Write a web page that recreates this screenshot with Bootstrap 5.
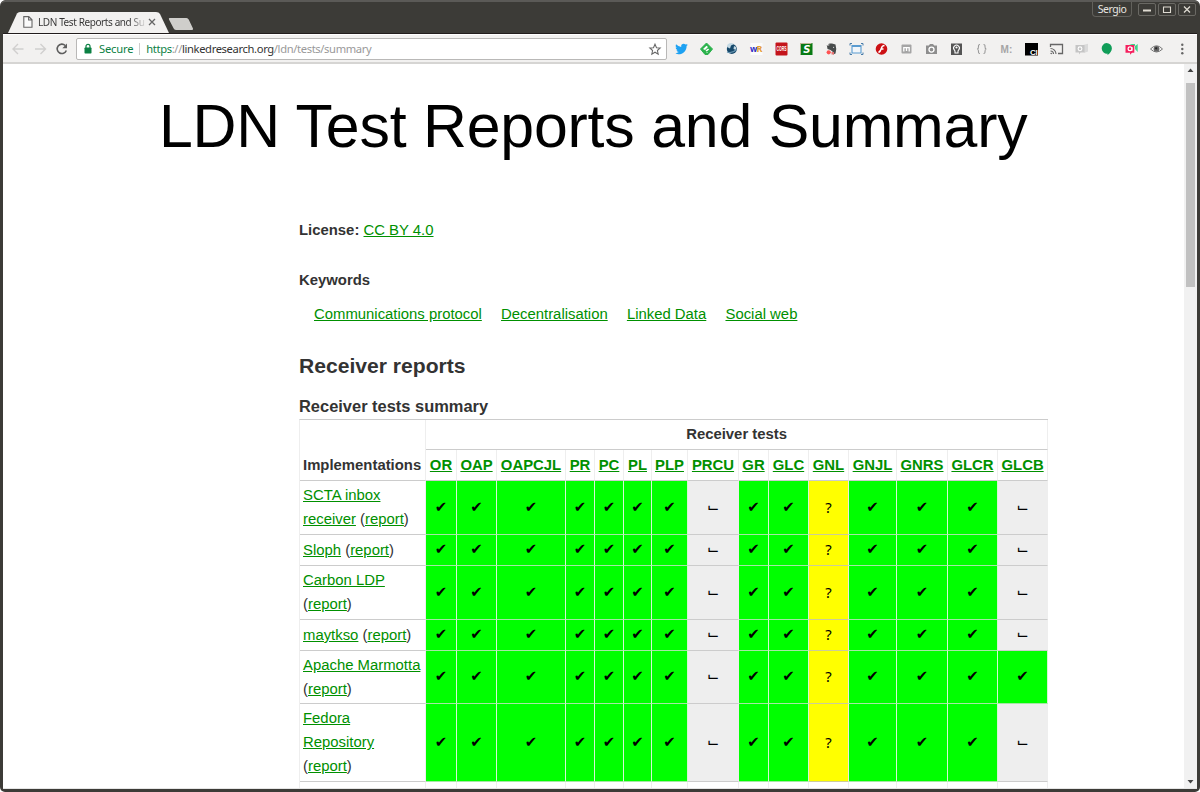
<!DOCTYPE html>
<html lang="en">
<head>
<meta charset="utf-8">
<meta name="viewport" content="width=device-width, initial-scale=1">
<title>LDN Test Reports and Summary</title>
<link rel="stylesheet" href="https://cdn.jsdelivr.net/npm/bootstrap@5.3.0/dist/css/bootstrap.min.css">
<style>
  body { background: #fff; }
  .win { width: 1200px; height: 792px; background: #3c3b37; font-family: "Liberation Sans", sans-serif; border-radius: 6px 6px 5px 5px; }
  .titlebar { height: 33px; border-top: 2px solid #5b5a57; border-radius: 6px 6px 0 0; font-family: "Noto Sans", sans-serif; }
  .tabstrip { height: 31px; }
  .tabstrip svg { display: block; }
  .browser-tab { width: 160px; height: 22px; }
  .tab-bg { left: 0; top: 0; }
  .tab-face { padding-left: 15px; font-size: 10px; color: #333; }
  .tab-title { width: 109px; margin-left: 5px; letter-spacing: -.4px; background: linear-gradient(90deg,#333 84%,#e6e5e4 99%); -webkit-background-clip: text; background-clip: text; color: transparent; }
  .user-btn { width: 40px; height: 15px; margin-right: 4px; border: 1px solid #62615c; border-top: 0; border-radius: 0 0 4px 4px; font-size: 10.5px; line-height: 14px; color: #e8e6e1; letter-spacing: -.45px; }
  .win-btn { width: 18px; height: 13px; border: 1px solid #6a6964; border-radius: 2px; margin: 1px 0 0 2px; }
  .frame { height: 756px; margin: 0 3px; border-top: 1px solid #211c1c; }
  .toolbar-row { height: 30px; background: #f2f1f0; border-top: 1px solid #fff; border-bottom: 2px solid #d6d5d3; padding-left: 5px; }
  .toolbar-row svg { display: block; flex: none; }
  .omnibox { width: 591px; height: 22px; margin-left: 3px; background: #fff; border: 1px solid #b9b8b7; border-radius: 2px; font: 11.2px/20px "Noto Sans", sans-serif; color: #999; }
  .omnibox .sec { color: #0b8043; }
  .omnibox .host { color: #333; }
  .omnibox .sep { width: 1px; height: 12px; background: #ccc; margin: 0 6px 0 6px; }
  .omnibox .state { letter-spacing: -.2px; }
  .url { letter-spacing: -.36px; }
  .exts { margin-left: 2px; }
  .page { height: 725px; background: #fff; border-bottom: 1px solid #e5e5e5; }
  .doc { font-size: 14.89px; line-height: 24px; color: #333; }
  .doc a { color: #009000; text-decoration: underline; }
  .doc h1 { font-size: 60.8px; line-height: 80px; letter-spacing: -.2px; color: #000; font-weight: 400; margin: 22px 0 52px 156px; white-space: nowrap; }
  .body-col { margin-left: 296px; width: 749px; }
  .kw { margin: 26px 0 10px; }
  .kw-list { padding-left: 15px; gap: 19.2px; }
  .doc h2 { font-size: 21.1px; line-height: 30px; font-weight: 700; margin: 25px 0 13px; }
  .cap { font-size: 16.45px; line-height: 24px; height: 25px; font-weight: 700; }
  .report { width: 749px; table-layout: fixed; border-collapse: separate; border-spacing: 0; border: 0 solid; border-width: 1px 0 0 1px; border-color: #ccc #ccc #ccc #eee; line-height: 23.8px; }
  .report th, .report td { border: 0 solid; border-width: 0 1px 1px 0; border-color: #eee #eee #ccc #eee; padding: 0; text-align: center; vertical-align: middle; white-space: nowrap; color: #333; }
  .report .testname { padding-top: 1px; }
  .report td:first-child, .report .impl { text-align: left; padding-left: 3px; }
  .report td:first-child { padding-top: 1px; }
  .report .impl { vertical-align: bottom; padding-bottom: 2px; }
  .report .ok { background: #0f0; border-color: #bfffbf #d5f5d5 #a6e6a6; }
  .report .maybe { background: #ff0; border-color: #eee #eed #cc9; }
  .report .none { background: #eee; }
  .report .ok, .report .maybe, .report .none { color: #000; font-family: "Liberation Sans","DejaVu Sans", sans-serif; }
  .report .maybe { font-family: "Noto Sans", sans-serif; }
  .sbar { width: 13px; background: #f1f1f1; }
  .sbar-thumb { width: 9px; height: 204px; background: #c1c1c1; margin-top: 8px; }
</style>
</head>
<body class="overflow-hidden">
<div class="win overflow-hidden">
  <header class="titlebar d-flex justify-content-between">
    <div class="tabstrip d-flex align-items-end ps-2">
      <div class="browser-tab position-relative">
        <svg class="tab-bg position-absolute" width="166" height="22"><path d="M0 22 L9 2.500 Q10 1 12 1 H148 Q151 1 152 3 L161 22Z" fill="#f2f1f0"/></svg>
        <div class="tab-face position-relative d-flex align-items-center h-100">
          <svg class="flex-shrink-0" width="10" height="12" viewBox="0 0 10 12"><path d="M.8.6H5.8L9 3.800V11.200H.8ZM5.600.8V4H8.800" fill="#fafafa" stroke="#666" stroke-width="1.100"/></svg>
          <div class="tab-title text-nowrap">LDN Test Reports and Su</div>
          <svg class="flex-shrink-0" width="8" height="8" viewBox="0 0 8 8" style="margin-left:1px"><path d="M1 1 7 7M7 1 1 7" stroke="#666" stroke-width="1.300"/></svg>
        </div>
      </div>
      <svg width="28" height="20" viewBox="0 0 28 20"><path d="M1.500 5H18.500Q20 5 20.700 6.500L25 15.500Q25.300 17 24 17H8.500Q6.500 17 5.700 15.500L1 6.500Q.5 5 1.500 5Z" fill="#cfcecb"/></svg>
    </div>
    <div class="d-flex pe-1">
      <div class="user-btn text-center">Sergio</div>
      <div class="win-btn d-flex align-items-center justify-content-center"><svg width="10" height="9"><path d="M1 5.500H9" stroke="#dfdbd2" stroke-width="1.800"/></svg></div>
      <div class="win-btn d-flex align-items-center justify-content-center"><svg width="10" height="9"><path d="M1.500 2V7.500H8.500V2M1 2H9" fill="none" stroke="#dfdbd2" stroke-width="1.100"/></svg></div>
      <div class="win-btn d-flex align-items-center justify-content-center"><svg width="10" height="9"><path d="M2 1.500 8 7.500M8 1.500 2 7.500" stroke="#dfdbd2" stroke-width="1.300"/></svg></div>
    </div>
  </header>
  <div class="frame">
    <nav class="toolbar-row d-flex align-items-center">
      <svg width="22" height="20" viewBox="0 0 22 20"><path d="M15.500 10H5.500M10 5 5 10 10 15" fill="none" stroke="#d0cfce" stroke-width="1.400"/></svg>
      <svg width="22" height="20" viewBox="0 0 22 20"><path d="M5 10H15M10.500 5 15.500 10 10.500 15" fill="none" stroke="#d0cfce" stroke-width="1.400"/></svg>
      <svg width="21" height="20" viewBox="0 0 21 20"><path d="M13.200 6.500A4.700 4.700 0 1 0 14.300 11.500" fill="none" stroke="#5e5e5e" stroke-width="1.600"/><path d="M15 4.500V9.300H10.300Z" fill="#5e5e5e"/></svg>
      <div class="omnibox d-flex align-items-center">
        <svg width="22" height="20" viewBox="0 0 22 20"><rect x="7.500" y="8.500" width="7" height="6" rx=".7" fill="#0b8043"/><path d="M9 9V7.300a2 2 0 0 1 4 0V9" fill="none" stroke="#0b8043" stroke-width="1.200"/></svg>
        <span class="sec state">Secure</span><span class="sep"></span>
        <span class="url text-nowrap"><span class="sec">https</span>://<span class="host">linkedresearch.org</span>/ldn/tests/summary</span>
        <svg class="ms-auto" width="22" height="20" viewBox="0 0 22 20"><path d="M11 5.200 12.500 8.700 16.200 9 13.400 11.500 14.200 15.200 11 13.200 7.800 15.200 8.600 11.500 5.800 9 9.500 8.700Z" fill="none" stroke="#666" stroke-width="1.050"/></svg>
      </div>
      <div class="exts d-flex">
        <svg width="25" height="20" viewBox="0 0 25 20"><path d="M19 5.600Q18.500 6.300 17.600 6.900C17.800 12 13.500 15.500 9.200 15.200Q7.300 15 6 14.100Q8 14.300 9.800 13.100Q7.900 12.800 7.500 11.300H8.600Q6.600 10.400 6.600 8.600L7.700 8.900Q5.900 7.200 7 5.200Q9.200 7.600 12.200 7.900C11.700 5.300 14.700 3.900 16.500 5.600L18.300 5 17.400 6.200Z" fill="#1da1f2"/></svg>
        <svg width="25" height="20" viewBox="0 0 25 20"><path d="M12.500 4 18.500 10 14 15.500H11L6.500 10Z" fill="#2bb24c" stroke="#2bb24c" stroke-linejoin="round"/><path d="M9 10 12.500 6.700 14 8.100 11 11ZM11.500 11.500 14 9.500 15.200 10.600 12.700 12.600ZM12 14 13.300 13 13.800 13.800Z" fill="#fff"/></svg>
        <svg width="25" height="20" viewBox="0 0 25 20"><circle cx="12.800" cy="10" r="5" fill="#17496b"/><path d="M8.500 5.500Q12 3 15 5L12 6.500 11 9.500 8 8ZM15 7 17 8V11L14.500 10Z" fill="#c4d9e4"/><path d="M8 13Q13 15 17.500 10.500" stroke="#6794b0" fill="none" stroke-width="1.300"/></svg>
        <svg width="25" height="20" viewBox="0 0 25 20"><rect x="6.500" y="4" width="12" height="12" fill="#fff" opacity=".7"/><text x="6" y="13" font-family="Noto Sans" font-weight="700" font-size="8.500" letter-spacing="-.8" fill="#2d2bc4">w<tspan fill="#e49a30" font-size="9">R</tspan></text></svg>
        <svg width="25" height="20" viewBox="0 0 25 20"><rect x="6.500" y="3.500" width="12" height="13" rx="1" fill="#c4141b"/><text x="7.500" y="12" font-family="Liberation Sans" font-weight="700" font-size="6.500" textLength="10" lengthAdjust="spacingAndGlyphs" fill="#fff">CORS</text></svg>
        <svg width="25" height="20" viewBox="0 0 25 20"><rect x="6.500" y="4" width="12" height="12" fill="#087a13"/><path d="M6 4H18L17 5H7V15L6 16Z" fill="#bdb695"/><text x="9.300" y="14" font-family="DejaVu Sans" font-style="italic" font-weight="700" font-size="10" fill="#fff">S</text></svg>
        <svg width="25" height="20" viewBox="0 0 25 20"><path d="M8 7 10.500 4.500H13L16.500 5.500Q18 10 16.500 14.500L14 15.500 14 13 11.500 11 8.500 10Z" fill="#484b4b"/><path d="M7.500 6.500H10V4.500" fill="none" stroke="#aaa" stroke-width=".7"/><circle cx="14.600" cy="8.300" r=".6" fill="#ddd"/><circle cx="9.700" cy="13.300" r="2.100" fill="#ff5252"/><rect x="12.500" y="13" width="2.500" height="2.500" fill="#e57373"/></svg>
        <svg width="25" height="20" viewBox="0 0 25 20"><path d="M8 6.500H17V14H8Z" fill="#f2f6fa" stroke="#5a9bd0" stroke-width="1.100"/><path d="M8 7H17" stroke="#5a9bd0" stroke-width="2"/><path d="M6 6.500V4.500H8M17 4.500H19V6.500M19 13.500V15.500H17M8 15.500H6V13.500" fill="none" stroke="#477ba8"/></svg>
        <svg width="25" height="20" viewBox="0 0 25 20"><circle cx="12.500" cy="10" r="5.800" fill="#cc1014"/><path d="M15.500 6.500Q13 6.500 12.300 9.500T9.500 13.500M11.500 10H14.500" fill="none" stroke="#fff" stroke-width="1.400"/></svg>
        <svg width="25" height="20" viewBox="0 0 25 20"><rect x="7.500" y="5.500" width="10" height="9" rx="1" fill="#a5a5a5"/><path d="M9.800 12.500V8.700H15.200V12.500M12.500 8.700V12" fill="none" stroke="#fff" stroke-width="1.300"/></svg>
        <svg width="25" height="20" viewBox="0 0 25 20"><path d="M7 6.500H9.800L11 5H14L15.200 6.500H18V15H7Z" fill="#8e8e8e"/><circle cx="12.500" cy="10.600" r="2.500" fill="none" stroke="#fff" stroke-width="1.300"/></svg>
        <svg width="25" height="20" viewBox="0 0 25 20"><rect x="7" y="4.500" width="11" height="11.500" fill="#555"/><path d="M11 12.500Q11 11.500 10 10.500A2.900 2.900 0 1 1 15 10.500Q14 11.500 14 12.500V14H11Z" fill="#555" stroke="#fff" stroke-width="1.100"/><circle cx="12.500" cy="8.500" r="1.100" fill="#fff"/></svg>
        <svg width="25" height="20" viewBox="0 0 25 20"><path d="M11 5.500Q9.300 5.500 9.500 7.500 9.600 9.800 8.200 10 9.600 10.200 9.500 12.500 9.300 14.500 11 14.500M14.500 5.500Q16.200 5.500 16 7.500 15.900 9.800 17.300 10 15.900 10.200 16 12.500 16.200 14.500 14.500 14.500" fill="none" stroke="#999" stroke-width="1.100"/></svg>
        <svg width="25" height="20" viewBox="0 0 25 20"><text x="6.500" y="13.500" font-family="Liberation Sans" font-size="10" font-weight="700" letter-spacing=".2" fill="#a5a5a5">M:</text></svg>
        <svg width="25" height="20" viewBox="0 0 25 20"><rect x="6" y="4" width="13" height="12.500" fill="#000"/><text x="11" y="15.500" font-family="Liberation Sans" font-size="8" font-weight="700" letter-spacing="-.2" fill="#fff">CI</text></svg>
        <svg width="25" height="20" viewBox="0 0 25 20"><path d="M6.500 8V5.500H18.500V14.500H14" fill="none" stroke="#666" stroke-width="1.300"/><path d="M6.500 9.500A5.500 5.500 0 0 1 12 15M6.500 12A3 3 0 0 1 9.500 15" fill="none" stroke="#666" stroke-width="1.100"/><circle cx="7.200" cy="14.500" r=".8" fill="#666"/></svg>
        <svg width="25" height="20" viewBox="0 0 25 20"><path d="M14 6 19 4.800V12.500L15 14Z" fill="#dadada"/><path d="M6.500 6H15.500V13.500H11.500L10 15.500V13.500H6.500Z" fill="#c5c5c5"/><circle cx="11" cy="9.800" r="1.900" fill="none" stroke="#fff" stroke-width="1.100"/></svg>
        <svg width="25" height="20" viewBox="0 0 25 20"><path d="M12.500 4A5.400 5.400 0 0 1 17.900 9.300C17.900 12 16 14.500 13.500 16V14.600A5.300 5.300 0 1 1 12.500 4Z" fill="#109d58"/></svg>
        <svg width="25" height="20" viewBox="0 0 25 20"><path d="M10 5H16V10L18.700 13V5L16 7Z" fill="#3fd68c"/><path d="M6.500 6H15.300V13.800H13L11 15.700V13.800H6.500Z" fill="#f5205e"/><circle cx="11" cy="9.800" r="1.900" fill="none" stroke="#fff" stroke-width="1.200"/><path d="M13 8V11.800" stroke="#fff"/></svg>
        <svg width="25" height="20" viewBox="0 0 25 20"><path d="M6.500 10Q12.500 3.500 18.500 10 12.500 16 6.500 10Z" fill="#f5f5f5" stroke="#777"/><circle cx="12.500" cy="9.800" r="2.900" fill="#666"/><circle cx="12.200" cy="9.300" r="1.100" fill="#222"/></svg>
        <svg width="25" height="20" viewBox="0 0 25 20"><g fill="#666"><circle cx="13.300" cy="5.700" r="1.200"/><circle cx="13.300" cy="10" r="1.200"/><circle cx="13.300" cy="14.300" r="1.200"/></g></svg>
      </div>
    </nav>
    <div class="page d-flex overflow-hidden">
      <main class="doc flex-grow-1">
        <h1>LDN Test Reports and Summary</h1>
        <div class="body-col">
          <div><b>License:</b> <a href="#">CC BY 4.0</a></div>
          <div class="kw fw-bold">Keywords</div>
          <div class="kw-list d-flex"><a href="#">Communications protocol</a><a href="#">Decentralisation</a><a href="#">Linked Data</a><a href="#">Social web</a></div>
          <h2>Receiver reports</h2>
          <div class="cap">Receiver tests summary</div>
          <table class="report" id="report">
            <colgroup id="cols"></colgroup>
            <thead id="head"></thead>
            <tbody id="rows"></tbody>
          </table>
        </div>
      </main>
      <div class="sbar d-flex flex-column align-items-center flex-shrink-0">
        <svg class="d-block flex-shrink-0" width="13" height="11"><path d="M3.500 8 6.500 4.500 9.500 8Z" fill="#444"/></svg>
        <div class="sbar-thumb flex-shrink-0"></div>
        <svg class="d-block mt-auto flex-shrink-0" width="13" height="12"><path d="M3.500 4 6.500 7.500 9.500 4Z" fill="#444"/></svg>
      </div>
    </div>
  </div>
</div>
<script src="https://cdn.jsdelivr.net/npm/bootstrap@5.3.0/dist/js/bootstrap.bundle.min.js"></script>
<script>
  const widths = [126,31,40,69,29,29,28,36,51,30,40,40,48,51,50,50];
  const tests = ['OR','OAP','OAPCJL','PR','PC','PL','PLP','PRCU','GR','GLC','GNL','GNJL','GNRS','GLCR','GLCB'];
  const report = '(<a href="#">report</a>)';
  const impls = [
    ['<a href="#">SCTA inbox<br>receiver</a> ' + report, 54],
    ['<a href="#">Sloph</a> ' + report, 31],
    ['<a href="#">Carbon LDP</a><br>' + report, 54],
    ['<a href="#">maytkso</a> ' + report, 31],
    ['<a href="#">Apache Marmotta</a><br>' + report, 53],
    ['<a href="#">Fedora<br>Repository</a><br>' + report, 78],
    ['', 31]
  ];
  document.getElementById('cols').innerHTML = widths.map(w => `<col style="width:${w}px">`).join('');
  document.getElementById('head').innerHTML =
    '<tr style="height:30px"><th class="impl" rowspan="2">Implementations</th><th colspan="15">Receiver tests</th></tr>' +
    '<tr style="height:31px">' + tests.map(t => `<th class="testname"><a href="#">${t}</a></th>`).join('') + '</tr>';
  document.getElementById('rows').innerHTML = impls.map(([name, h]) =>
    `<tr style="height:${h}px"><td>${name}</td>` + tests.map(t => {
      if (!name) return '<td></td>';
      if (t === 'GNL') return '<td class="maybe">?</td>';
      if (t === 'PRCU' || (t === 'GLCB' && !name.includes('Marmotta'))) return '<td class="none">⌙</td>';
      return '<td class="ok">✔</td>';
    }).join('') + '</tr>').join('');
</script>
</body>
</html>
